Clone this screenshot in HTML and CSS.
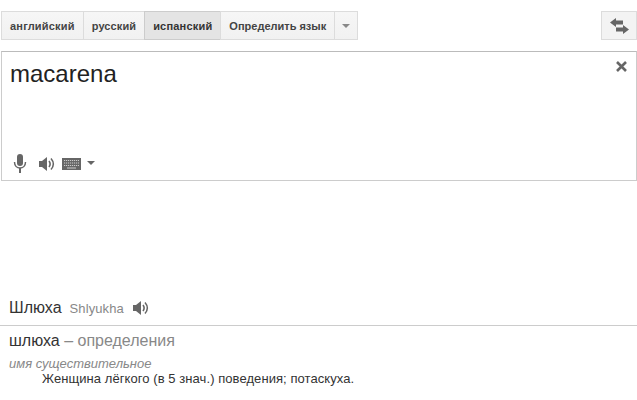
FILE: index.html
```html
<!DOCTYPE html>
<html lang="ru">
<head>
  <meta charset="UTF-8" />
  <title>Переводчик</title>
  <link rel="stylesheet" href="styles.css">
</head>
<body>
  <div class="toolbar">
    <div class="lang-tabs">
      <button class="tab first">английский</button>
      <button class="tab second">русский</button>
      <button class="tab selected">испанский</button>
      <button class="tab detect">Определить язык</button>
      <button class="tab arrow-tab"><span class="caret"></span></button>
    </div>
    <button class="swap-btn">
      <svg width="19" height="16" viewBox="0 0 19 16">
        <path d="M0 4.5 L6 0 V2.5 H13 V6.5 H6 V9 Z" fill="#666"/>
        <path d="M19 11.5 L13 7 V9.5 H6 V13.5 H13 V16 Z" fill="#666"/>
      </svg>
    </button>
  </div>

  <div class="input-box">
    <div class="source-text">macarena</div>
    <svg class="clear" width="11" height="11" viewBox="0 0 11 11">
      <path d="M1 1 L10 10 M10 1 L1 10" stroke="#666" stroke-width="2.6"/>
    </svg>
    <div class="input-tools">
      <svg width="14" height="19" viewBox="0 0 14 19">
        <rect x="4" y="0" width="6" height="12" rx="3" fill="#666"/>
        <path d="M1.5 8 C1.5 16 12.5 16 12.5 8" fill="none" stroke="#666" stroke-width="1.5"/>
        <rect x="6" y="14" width="2" height="5" fill="#666"/>
      </svg>
      <svg class="speaker" width="16" height="16" viewBox="0 0 16 16">
        <path d="M0 5 H3 L8 1 V15 L3 11 H0 Z" fill="#666"/>
        <path d="M10 5 C11.5 7 11.5 9 10 11" fill="none" stroke="#666" stroke-width="1.6"/>
        <path d="M12 2.5 C15 6 15 10 12 13.5" fill="none" stroke="#666" stroke-width="1.5"/>
      </svg>
      <svg class="keyboard" width="19" height="12" viewBox="0 0 19 12">
        <rect width="19" height="12" fill="#666"/>
        <path d="M2 2.5 H17 M2 5 H17 M2 7.5 H17" stroke="#ccc" stroke-width="1" stroke-dasharray="1.2 .8"/>
        <path d="M5 10 H14" stroke="#ccc" stroke-width="1"/>
      </svg>
      <span class="caret dark"></span>
    </div>
  </div>

  <div class="result">
    <div class="translit-row">
      <span class="word">Шлюха</span>
      <span class="translit">Shlyukha</span>
      <svg width="16" height="16" viewBox="0 0 16 16">
        <path d="M0 5 H3 L8 1 V15 L3 11 H0 Z" fill="#666"/>
        <path d="M10 5 C11.5 7 11.5 9 10 11" fill="none" stroke="#666" stroke-width="1.6"/>
        <path d="M12 2.5 C15 6 15 10 12 13.5" fill="none" stroke="#666" stroke-width="1.5"/>
      </svg>
    </div>
    <div class="definitions">
      <div class="def-title">шлюха <span class="muted">– определения</span></div>
      <div class="pos">имя существительное</div>
      <div class="gloss">Женщина лёгкого (в 5 знач.) поведения; потаскуха.</div>
    </div>
  </div>
</body>
</html>
```

FILE: styles.css
```css
body {
  margin: 0;
  background: #fff;
  font-family: "Liberation Sans", Arial, sans-serif;
  color: #222;
  overflow: hidden;
}
.toolbar {
  display: flex;
  justify-content: space-between;
  padding: 11px 0 0 1px;
}
.lang-tabs {
  display: flex;
}
.tab {
  height: 29px;
  padding: 0 8px;
  margin: 0 0 0 -1px;
  border: 1px solid #dcdcdc;
  background: linear-gradient(#f6f6f6, #f1f1f1);
  font-family: inherit;
  font-size: 11px;
  font-weight: bold;
  letter-spacing: 0.2px;
  color: #444;
}
.tab.first {
  margin-left: 0;
}
.tab.second {
  letter-spacing: 0.1px;
}
.tab.selected {
  background: #e4e4e4;
  border-color: #ccc;
  color: #333;
}
.tab.detect {
  letter-spacing: 0;
}
.arrow-tab {
  width: 24px;
  padding: 0;
  display: flex;
  align-items: center;
  justify-content: center;
}
.caret {
  display: block;
  width: 0;
  height: 0;
  border-left: 4px solid transparent;
  border-right: 4px solid transparent;
  border-top: 4px solid #888;
}
.caret.dark {
  border-top-color: #666;
}
.swap-btn {
  width: 36px;
  height: 29px;
  padding: 0;
  display: flex;
  align-items: center;
  justify-content: center;
  border: 1px solid #dcdcdc;
  background: #f3f3f3;
}
.input-box {
  position: relative;
  box-sizing: border-box;
  height: 130px;
  margin: 11px 0 0 1px;
  padding: 8px 8px 0;
  border: 1px solid #ccc;
  border-top-color: #bbb;
}
.source-text {
  font-size: 24px;
  line-height: 28px;
  color: #222;
}
.clear {
  position: absolute;
  top: 9px;
  right: 9px;
}
.input-tools {
  position: absolute;
  left: 11px;
  bottom: 7px;
  display: flex;
  align-items: center;
}
.speaker {
  margin-left: 12px;
}
.keyboard {
  margin-left: 7px;
}
.input-tools .caret {
  margin-left: 6px;
  margin-bottom: 2px;
}
.result {
  margin-top: 115px;
}
.translit-row {
  display: flex;
  align-items: center;
  height: 24px;
  padding: 0 0 5px 9px;
  border-bottom: 1px solid #ccc;
}
.word {
  font-size: 16px;
  color: #333;
}
.translit {
  margin: 0 9px 0 8px;
  font-size: 13px;
  letter-spacing: 0.1px;
  color: #888;
}
.definitions {
  padding: 5px 0 0 9px;
}
.def-title {
  font-size: 16px;
  line-height: 19px;
  color: #333;
}
.muted {
  color: #888;
}
.pos {
  margin-top: 7px;
  font-size: 13px;
  line-height: 14px;
  font-style: italic;
  color: #888;
}
.gloss {
  padding-left: 33px;
  font-size: 13px;
  line-height: 15px;
  letter-spacing: 0.07px;
  color: #333;
}
```
